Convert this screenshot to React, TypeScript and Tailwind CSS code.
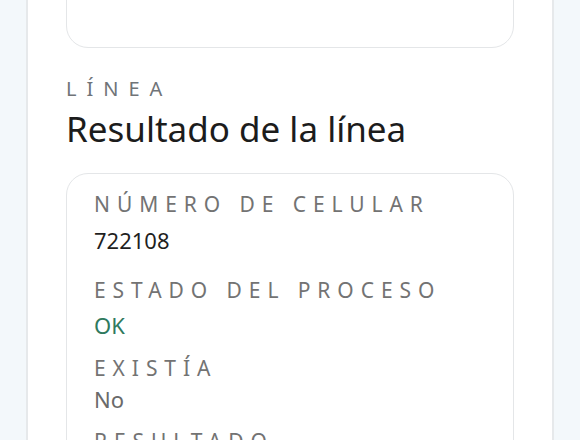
const font = { fontFamily: '"Noto Sans", "Open Sans", sans-serif' };

const rows = [
  { label: 'NÚMERO DE CELULAR', value: '722108', valueClass: 'text-[#1f1f1f]', labelMt: 'mt-0', valueMt: 'mt-[7px]' },
  { label: 'ESTADO DEL PROCESO', value: 'OK', valueClass: 'text-[#2f7a5e]', labelMt: 'mt-[21px]', valueMt: 'mt-[6px]' },
  { label: 'EXISTÍA', value: 'No', valueClass: 'text-[#6a6a6a]', labelMt: 'mt-[14px]', valueMt: 'mt-[2px]' },
  { label: 'RESULTADO', value: '', valueClass: '', labelMt: 'mt-[13px]', valueMt: 'mt-0' },
];

export default function App() {
  return (
    <div className="h-[440px] overflow-hidden bg-[#f3f8fb]" style={font}>
      <div className="mx-auto h-[520px] w-[528px] border-x-2 border-[#e6e9eb] bg-white px-[38px]">
        <div className="-mt-[40px] h-[88px] rounded-[22px] border-[1.5px] border-[#e4e6e8]" />

        <div className="mt-[27px] text-[20px] leading-[28px] tracking-[0.5em] text-[#707478]">LÍNEA</div>
        <h2 className="mt-[6px] text-[35px] leading-[40px] text-[#1c1c1c]">Resultado de la línea</h2>

        <div className="mt-[24px] rounded-[22px] border border-[#e4e6e8] pl-[27px] pt-4 pb-8">
          {rows.map((r) => (
            <div key={r.label}>
              <div className={`${r.labelMt} text-[21px] leading-[28px] tracking-[0.33em] text-[#737373]`}>
                {r.label}
              </div>
              {r.value && (
                <div className={`${r.valueMt} text-[22px] leading-[30px] ${r.valueClass}`}>{r.value}</div>
              )}
            </div>
          ))}
        </div>
      </div>
    </div>
  );
}
